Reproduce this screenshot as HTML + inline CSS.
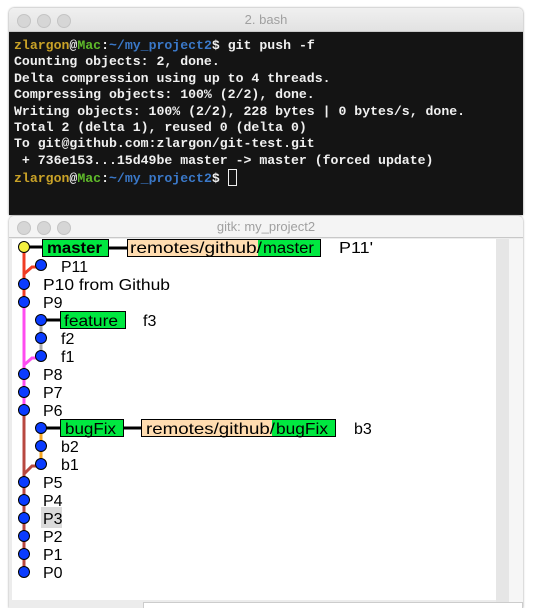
<!DOCTYPE html>
<html><head><style>
html,body{margin:0;padding:0;width:536px;height:608px;background:#fff;overflow:hidden;position:relative;font-family:"Liberation Sans",sans-serif}
.win{position:absolute;left:9px;width:514px;border-radius:5px 5px 0 0;overflow:hidden}
.tb{height:23px;background:linear-gradient(#f0f0f0,#e2e2e2);border-bottom:1px solid #c8c8c8;position:relative;text-align:center;font-size:13px;color:#a0a0a0;line-height:23px}
.dot{position:absolute;top:6px;width:12px;height:12px;border-radius:50%;background:#d6d6d6;border:0.5px solid #c4c4c4}
.term{background:#141414;height:183px;font-family:"Liberation Mono",monospace;font-weight:bold;font-size:13.2px;color:#f0f0f0;padding:6px 0 0 5px;line-height:16.4px;white-space:pre}
.y{color:#c9a227}.g{color:#5fba2a}.b{color:#3a78c8}
</style></head><body>
<div class="win" style="top:8px;height:207px;box-shadow:0 0 2px #888">
 <div class="tb"><span class="dot" style="left:8px"></span><span class="dot" style="left:28px"></span><span class="dot" style="left:48px"></span>2. bash</div>
 <div class="term"><span class="y">zlargon</span>@<span class="g">Mac</span>:<span class="b">~/my_project2</span>$ git push -f
Counting objects: 2, done.
Delta compression using up to 4 threads.
Compressing objects: 100% (2/2), done.
Writing objects: 100% (2/2), 228 bytes | 0 bytes/s, done.
Total 2 (delta 1), reused 0 (delta 0)
To git@github.com:zlargon/git-test.git
 + 736e153...15d49be master -&gt; master (forced update)
<span class="y">zlargon</span>@<span class="g">Mac</span>:<span class="b">~/my_project2</span>$ <span style="display:inline-block;width:7px;height:15px;border:1px solid #eee;vertical-align:-4px"></span></div>
</div>
<div class="win" style="top:216px;height:392px;background:#ececec;box-shadow:0 0 2px #999">
 <div class="tb" style="height:21px;line-height:21px;background:#f4f4f4"><span class="dot" style="left:8px;top:5px"></span><span class="dot" style="left:28px;top:5px"></span><span class="dot" style="left:48px;top:5px"></span>gitk: my_project2</div>
 <div style="position:absolute;left:487px;top:23px;width:13px;height:363px;background:#e6e6e6"></div>
 <div style="position:absolute;left:500px;top:23px;width:14px;height:363px;background:#f6f6f6"></div>
 <div style="position:absolute;left:134px;top:386px;width:378px;height:10px;background:#fff;border:1px solid #ccc"></div>
</div>
<svg style="position:absolute;left:12px;top:239px" width="484" height="361" viewBox="12 239 484 361" font-family="Liberation Sans, sans-serif" font-size="16">
<rect x="12" y="239" width="484" height="361" fill="#fff"/>
<rect x="41" y="507" width="21" height="21" fill="#dadada"/>
<g stroke-width="3" fill="none">
<path d="M24 247 V301" stroke="#f03c24"/>
<path d="M24 274 L32 267 H41" stroke="#f03c24"/>
<path d="M24 301 V410" stroke="#ff4cf0"/>
<path d="M24 365 L32 358 H41" stroke="#ff4cf0"/>
<path d="M24 410 V571" stroke="#b84840"/>
<path d="M24 474 L32 466 H41" stroke="#b84840"/>
<path d="M41 320 V356" stroke="#aaa"/>
<path d="M41 428 V464" stroke="#f5a623"/>
</g>
<g stroke="#000" stroke-width="3">
<path d="M24 247 H42 M109 248 H127"/>
<path d="M41 320 H60"/>
<path d="M41 428 H60 M124 428 H141"/>
</g>
<g>
<rect x="42.5" y="239.5" width="66" height="17" fill="#00e840" stroke="#000"/>
<text x="47" y="253" font-weight="bold" textLength="55" lengthAdjust="spacingAndGlyphs">master</text>
<rect x="127.5" y="239.5" width="131" height="17" fill="#ffdcb0" stroke="#000"/>
<rect x="258" y="240" width="63" height="16" fill="#00e840"/>
<rect x="127.5" y="239.5" width="193" height="17" fill="none" stroke="#000"/>
<text x="130" y="253" textLength="132" lengthAdjust="spacingAndGlyphs">remotes/github/</text>
<text x="263" y="253" textLength="51" lengthAdjust="spacingAndGlyphs">master</text>
<text x="339" y="253" textLength="34" lengthAdjust="spacingAndGlyphs">P11'</text>
<rect x="60.5" y="311.5" width="65" height="17" fill="#00e840" stroke="#000"/>
<text x="64" y="326" textLength="54" lengthAdjust="spacingAndGlyphs">feature</text>
<text x="143" y="326">f3</text>
<rect x="60.5" y="419.5" width="63" height="17" fill="#00e840" stroke="#000"/>
<text x="65" y="434" textLength="51" lengthAdjust="spacingAndGlyphs">bugFix</text>
<rect x="141.5" y="419.5" width="131" height="17" fill="#ffdcb0" stroke="#000"/>
<rect x="272" y="420" width="64" height="16" fill="#00e840"/>
<rect x="141.5" y="419.5" width="194" height="17" fill="none" stroke="#000"/>
<text x="146" y="434" textLength="129" lengthAdjust="spacingAndGlyphs">remotes/github/</text>
<text x="276" y="434" textLength="52" lengthAdjust="spacingAndGlyphs">bugFix</text>
<text x="354" y="434">b3</text>
<text x="61" y="272" textLength="27" lengthAdjust="spacingAndGlyphs">P11</text>
<text x="43" y="290" textLength="127" lengthAdjust="spacingAndGlyphs">P10 from Github</text>
<text x="43" y="308">P9</text>
<text x="61" y="344">f2</text>
<text x="61" y="362">f1</text>
<text x="43" y="380">P8</text>
<text x="43" y="398">P7</text>
<text x="43" y="416">P6</text>
<text x="61" y="452">b2</text>
<text x="61" y="470">b1</text>
<text x="43" y="488">P5</text>
<text x="43" y="506">P4</text>
<text x="43" y="524">P3</text>
<text x="43" y="542">P2</text>
<text x="43" y="560">P1</text>
<text x="43" y="578">P0</text>
</g>
<g stroke="#000" stroke-width="1" fill="#0a3cff">
<circle cx="24" cy="247" r="5.5" fill="#f4f040"/>
<circle cx="41" cy="265" r="5.5"/>
<circle cx="24" cy="284" r="5.5"/>
<circle cx="24" cy="302" r="5.5"/>
<circle cx="41" cy="320" r="5.5"/>
<circle cx="41" cy="338" r="5.5"/>
<circle cx="41" cy="356" r="5.5"/>
<circle cx="24" cy="374" r="5.5"/>
<circle cx="24" cy="392" r="5.5"/>
<circle cx="24" cy="410" r="5.5"/>
<circle cx="41" cy="428" r="5.5"/>
<circle cx="41" cy="446" r="5.5"/>
<circle cx="41" cy="464" r="5.5"/>
<circle cx="24" cy="482" r="5.5"/>
<circle cx="24" cy="500" r="5.5"/>
<circle cx="24" cy="518" r="5.5"/>
<circle cx="24" cy="536" r="5.5"/>
<circle cx="24" cy="554" r="5.5"/>
<circle cx="24" cy="572" r="5.5"/>
</g>
</svg>
</body></html>
